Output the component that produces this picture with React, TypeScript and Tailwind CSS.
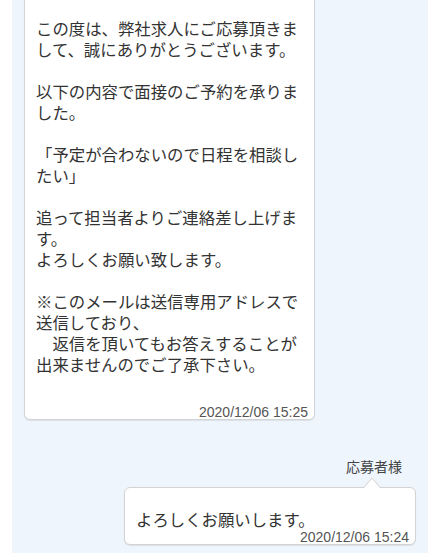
import React from "react";

const jp = { fontFamily: '"Noto Sans CJK JP", "Noto Sans", sans-serif' };
const num = { fontFamily: '"Liberation Sans", Arial, sans-serif' };

const body1 = [
  "この度は、弊社求人にご応募頂きま",
  "して、誠にありがとうございます。",
  "",
  "以下の内容で面接のご予約を承りま",
  "した。",
  "",
  "「予定が合わないので日程を相談し",
  "たい」",
  "",
  "追って担当者よりご連絡差し上げま",
  "す。",
  "よろしくお願い致します。",
  "",
  "※このメールは送信専用アドレスで",
  "送信しており、",
  "　返信を頂いてもお答えすることが",
  "出来ませんのでご了承下さい。",
].join("\n");

export default function App() {
  return (
    <div className="w-[440px] h-[553px] bg-white flex overflow-hidden" style={jp}>
      <div className="ml-[12px] w-[416px] h-full bg-[#eef5fd] flex flex-col">
        <div className="-mt-[8px] ml-[12px] w-[291px] bg-white border border-[#d3d3d3] rounded-[6px] shadow-[0_1px_1px_rgba(0,0,0,0.08)] pt-[24.5px] pl-[11px] pr-[6px] flex flex-col">
          <p className="text-[16.4px] leading-[21px] text-[#333] whitespace-pre">{body1}</p>
          <div className="mt-[30px] self-end text-[14px] leading-[14px] text-[#555]" style={num}>
            2020/12/06 15:25
          </div>
        </div>

        <div className="mt-[36px] self-end mr-[26px] text-[14px] leading-[20px] text-[#444]">
          応募者様
        </div>

        <div className="relative mt-[11px] self-end mr-[12px] w-[292px] bg-white border border-[#d3d3d3] rounded-[6px] shadow-[0_1px_1px_rgba(0,0,0,0.08)] pt-[21px] pl-[11px] pr-[6px] flex flex-col">
          <svg
            className="absolute -top-[11px] left-[238px]"
            width="18"
            height="12"
            viewBox="0 0 18 12"
          >
            <path d="M0 11.5 L9 1 L18 11.5 Z" fill="#ffffff" />
            <path d="M0 11.5 L9 1 L18 11.5" fill="none" stroke="#d3d3d3" strokeWidth="1" />
            <rect x="0.5" y="11" width="17" height="2" fill="#ffffff" />
          </svg>
          <p className="text-[16.4px] leading-[21px] text-[#333] whitespace-pre">よろしくお願いします。</p>
          <div className="self-end text-[14px] leading-[14px] text-[#555]" style={num}>
            2020/12/06 15:24
          </div>
        </div>
      </div>
    </div>
  );
}
